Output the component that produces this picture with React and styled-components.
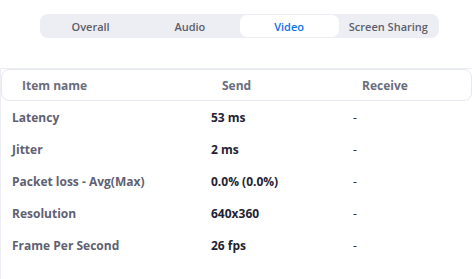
import React, { useState } from 'react';
import styled, { createGlobalStyle } from 'styled-components';

const GlobalStyle = createGlobalStyle`
  html, body {
    margin: 0;
    padding: 0;
    background: #ffffff;
  }
  body {
    font-family: "Open Sans", "Liberation Sans", sans-serif;
    -webkit-font-smoothing: antialiased;
  }
`;

const Page = styled.div`
  width: 472px;
  height: 279px;
  overflow: hidden;
  padding-top: 14px;
  box-sizing: border-box;
`;

const TabBar = styled.div`
  display: grid;
  grid-template-columns: repeat(4, 1fr);
  width: 399px;
  height: 24px;
  margin-left: 40px;
  padding: 1px;
  box-sizing: border-box;
  background: #edeef3;
  border-radius: 8px;
`;

const Tab = styled.div`
  display: flex;
  align-items: center;
  justify-content: center;
  border-radius: 7px;
  font-size: 11px;
  font-weight: 600;
  color: ${p => (p.$active ? '#0e71eb' : '#5c5e6b')};
  background: ${p => (p.$active ? '#ffffff' : 'transparent')};
  cursor: pointer;
`;

const Table = styled.div`
  margin-top: 30px;
  border-top: 1px solid #eceef4;
  border-left: 1px solid #eceef4;
  height: 212px;
`;

const HeaderRow = styled.div`
  display: grid;
  grid-template-columns: 200px 140px 1fr;
  align-items: center;
  height: 30px;
  padding-left: 20px;
  border: 1px solid #e7e9f0;
  border-radius: 8px;
  font-size: 12px;
  font-weight: 700;
  color: #6b6d7c;
`;

const Row = styled.div`
  display: grid;
  grid-template-columns: 199px 142px 1fr;
  align-items: center;
  height: 32px;
  padding-left: 11px;
  font-size: 12px;
`;

const Label = styled.span`
  font-weight: 700;
  color: #5f6172;
`;

const Value = styled.span`
  font-weight: 700;
  color: #232333;
`;

const Dash = styled.span`
  color: #232333;
  font-weight: 400;
`;

const tabs = ['Overall', 'Audio', 'Video', 'Screen Sharing'];

const rows = [
  ['Latency', '53 ms', '-'],
  ['Jitter', '2 ms', '-'],
  ['Packet loss - Avg(Max)', '0.0% (0.0%)', '-'],
  ['Resolution', '640x360', '-'],
  ['Frame Per Second', '26 fps', '-'],
];

export default function App() {
  const [active, setActive] = useState('Video');
  return (
    <Page>
      <GlobalStyle />
      <TabBar>
        {tabs.map(t => (
          <Tab key={t} $active={t === active} onClick={() => setActive(t)}>
            {t}
          </Tab>
        ))}
      </TabBar>
      <Table>
        <HeaderRow>
          <span>Item name</span>
          <span>Send</span>
          <span>Receive</span>
        </HeaderRow>
        {rows.map(([name, send, recv]) => (
          <Row key={name}>
            <Label>{name}</Label>
            <Value>{send}</Value>
            <Dash>{recv}</Dash>
          </Row>
        ))}
      </Table>
    </Page>
  );
}
